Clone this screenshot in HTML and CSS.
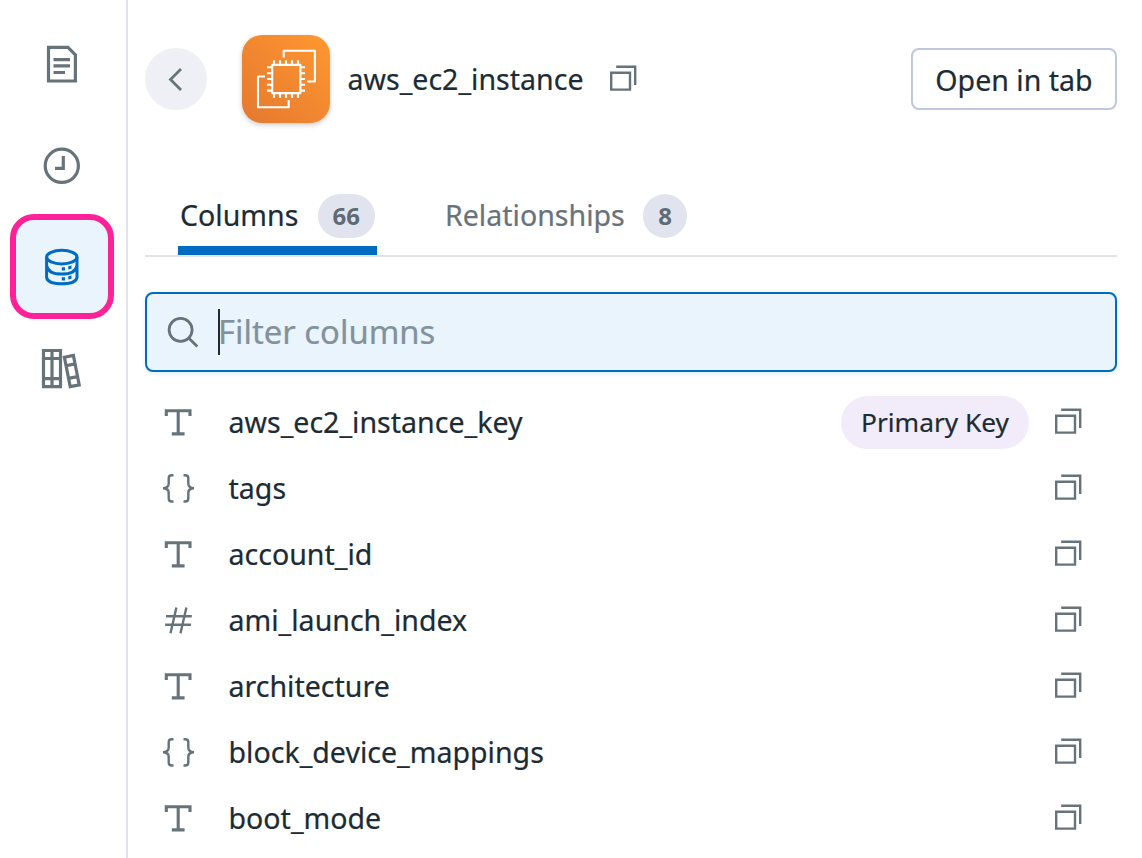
FILE: index.html
```html
<!DOCTYPE html>
<html lang="en">
<head>
<meta charset="utf-8">
<title>aws_ec2_instance</title>
<link rel="stylesheet" href="styles.css">
</head>
<body>
<svg class="defs" width="0" height="0">
  <symbol id="copy" viewBox="0 0 28 28"><path d="M6.2 1.8H25.2V20M1.2 7.8H20V24.6H1.2Z"/></symbol>
  <symbol id="text" viewBox="0 0 32 32"><path d="M4.3 10V4.7H28V10M16.2 4.5V27.5M9.8 27.9H22.6"/></symbol>
  <symbol id="json" viewBox="0 0 32 32"><path d="M11.5 3.2H9.8Q6.7 3.2 6.7 6.2V11.5Q6.7 15.9 1 16.2Q6.7 16.5 6.7 20.7V26.5Q6.7 29.5 9.8 29.5H11.5M21.5 3.2H23.2Q26.3 3.2 26.3 6.2V11.5Q26.3 15.9 32 16.2Q26.3 16.5 26.3 20.7V26.5Q26.3 29.5 23.2 29.5H21.5"/></symbol>
  <symbol id="number" viewBox="0 0 32 32"><path d="M14.4 3.5L8.5 29.3M24.4 3.5L18.5 29.3M4 12.3H29.8M3.2 20.8H29"/></symbol>
</svg>
<div class="app">
  <nav class="sidebar">
    <a class="nav-item"><svg width="52" height="52" viewBox="36 37.5 52 52"><path d="M48.5 46.8H68L75.4 54.3V80.5H48.5Z"/><path d="M53.5 59.1H70M53.5 65.4H70M53.5 72H65"/></svg></a>
    <a class="nav-item"><svg width="52" height="52" viewBox="36 139 52 52"><circle cx="61.8" cy="165.8" r="16.6"/><path d="M63.3 156V168.3H55"/></svg></a>
    <a class="nav-item active"><svg width="52" height="52" viewBox="36 240.5 52 52"><ellipse cx="61.8" cy="256.6" rx="15.2" ry="6.8"/><path d="M46.6 256.6V277Q47.5 283.3 61.8 283.3T77 277V256.6M46.6 265Q48 273.6 61.8 273.6T77 265"/><path class="dots" d="M61.8 266.7H65V270H61.8ZM68.3 265.7L71.5 265V268.3L68.3 269ZM61.8 276.7H65V280H61.8ZM68.3 275.7L71.5 275V278.3L68.3 279Z"/></svg></a>
    <a class="nav-item"><svg width="52" height="52" viewBox="36 343 52 52"><path d="M43.5 350.5H60.5V386.6H43.5ZM52 350.5V386.6M43.5 358.5H60.5M43.5 378.6H60.5M64.4 357.2L73.4 355.4L79.2 384.9L70.2 386.6ZM66 365.7L75 363.9M68.6 378.4L77.5 376.6"/></svg></a>
  </nav>
  <main class="panel">
    <header class="header">
      <button class="back"><svg width="62" height="62" viewBox="145 48 62 62"><path d="M181 69L170.5 79.5L181 90"/></svg></button>
      <div class="service"><svg width="88" height="88" viewBox="242 35 88 88"><path d="M272.2 64.9H300.4V93.1H272.2ZM274 60.3V64.5M280 60.3V64.5M286 60.3V64.5M292 60.3V64.5M298 60.3V64.5M274 93.5V98M280 93.5V98M286 93.5V98M292 93.5V98M298 93.5V98M267 67.3H271.5M267 73.2H271.5M267 79H271.5M267 84.8H271.5M267 90.6H271.5M301 67.3H305M301 73.2H305M301 79H305M301 84.8H305M301 90.6H305"/><path d="M283.7 57.5V50.8H314.9V81.5H307.2M265 76.5H258V107.3H288.7V100"/></svg></div>
      <h1 class="title">aws_ec2_instance</h1>
      <svg class="copy" width="28" height="28"><use href="#copy"/></svg>
      <button class="open">Open in tab</button>
    </header>
    <div class="tabs">
      <div class="tab selected"><span class="columns">Columns</span><b class="count">66</b></div>
      <div class="tab"><span class="relationships">Relationships</span><b class="count">8</b></div>
    </div>
    <div class="filter">
      <svg width="36" height="36" viewBox="165 313.5 36 36"><circle cx="180.6" cy="329.3" r="11.5"/><path d="M188.7 337.5L197.3 346"/></svg>
      <span class="caret"></span><span class="placeholder">Filter columns</span>
    </div>
    <ul class="list">
      <li class="row"><svg class="type bold" width="32" height="32"><use href="#text"/></svg><span class="name">aws_ec2_instance_key</span><span class="badge">Primary Key</span><svg class="copy" width="28" height="28"><use href="#copy"/></svg></li>
      <li class="row"><svg class="type" width="32" height="32"><use href="#json"/></svg><span class="name">tags</span><svg class="copy" width="28" height="28"><use href="#copy"/></svg></li>
      <li class="row"><svg class="type bold" width="32" height="32"><use href="#text"/></svg><span class="name">account_id</span><svg class="copy" width="28" height="28"><use href="#copy"/></svg></li>
      <li class="row"><svg class="type" width="32" height="32"><use href="#number"/></svg><span class="name">ami_launch_index</span><svg class="copy" width="28" height="28"><use href="#copy"/></svg></li>
      <li class="row"><svg class="type bold" width="32" height="32"><use href="#text"/></svg><span class="name">architecture</span><svg class="copy" width="28" height="28"><use href="#copy"/></svg></li>
      <li class="row"><svg class="type" width="32" height="32"><use href="#json"/></svg><span class="name">block_device_mappings</span><svg class="copy" width="28" height="28"><use href="#copy"/></svg></li>
      <li class="row"><svg class="type bold" width="32" height="32"><use href="#text"/></svg><span class="name">boot_mode</span><svg class="copy" width="28" height="28"><use href="#copy"/></svg></li>
    </ul>
  </main>
</div>
</body>
</html>
```
FILE: styles.css
```css
* { box-sizing: border-box; }
body { margin: 0; height: 858px; overflow: hidden; background: #fff; color: #1c2b34; font-family: "Noto Sans", sans-serif; font-size: 28.55px; line-height: 40px; -webkit-text-stroke: 0.2px; }
.defs { display: none; }
svg { display: block; flex: none; fill: none; stroke: #67737b; }
.app { display: flex; height: 858px; }
.sidebar { width: 128px; flex: none; border-right: 2px solid #e1e4ef; padding: 13px 0 0 10px; }
.nav-item { display: flex; align-items: center; justify-content: center; width: 104px; height: 101px; }
.nav-item svg { stroke-width: 3.2; }
.nav-item.active { height: 105px; margin: -1px 0; border: 6px solid #ff2197; border-radius: 24px; background: #e9f4fc; }
.nav-item.active svg { stroke: #006bc0; stroke-width: 3; }
.nav-item .dots { fill: #006bc0; stroke: none; }
.panel { flex: 1; min-width: 0; padding: 35px 25px 0 17px; }
.header { display: flex; align-items: center; height: 88px; }
.back { width: 62px; height: 62px; padding: 0; border: 0; border-radius: 50%; background: #eff0f5; }
.back svg { stroke-width: 2.8; }
.service { width: 88px; height: 88px; margin-left: 35px; border-radius: 20px; background: linear-gradient(45deg, #e4782f, #ff9831); box-shadow: 0 2px 5px #0003; }
.service svg { stroke: #fff; stroke-width: 2.1; stroke-linejoin: round; }
.title { width: 235px; margin: 0 27px 0 17.5px; font-size: 28.55px; font-weight: 400; white-space: nowrap; }
.copy { stroke-width: 2.4; }
.open { width: 206px; height: 62px; margin-left: auto; padding: 2px 0 0; border: 2px solid #bfc6e0; border-radius: 8px; background: #fff; color: inherit; font: inherit; white-space: nowrap; }
.tabs { display: flex; height: 67px; margin-top: 67px; padding-left: 33px; border-bottom: 2px solid #e1e4ef; }
.tab { display: flex; align-items: flex-start; justify-content: space-between; height: 65px; padding: 4px 2px 0; color: #67737b; white-space: nowrap; }
.tab.selected { width: 199px; color: #1c2b34; border-bottom: 9px solid #006bc0; }
.tab + .tab { width: 246px; margin-left: 66px; }
.tab span { padding-top: 1px; }
.count { min-width: 44px; height: 44px; padding: 0 15px; border-radius: 22px; background: #e1e4ee; color: #5e6b73; font-size: 24px; line-height: 44px; text-align: center; -webkit-text-stroke: 0; }
.filter { display: flex; align-items: center; height: 80px; margin-top: 35px; padding-left: 18px; border: 2px solid #006bc0; border-radius: 8px; background: #e9f4fc; box-shadow: 0 2px 4px #006bc01c; font-size: 32.8px; color: #82919a; }
.filter svg { stroke-width: 2.8; }
.caret { width: 2px; height: 46px; margin-left: 17px; background: #1c2b34; }
.placeholder { margin-left: -2px; }
.list { margin: 17px 0 0; padding: 0; list-style: none; }
.row { display: flex; align-items: center; height: 66px; padding: 0 34px 0 17px; white-space: nowrap; }
.type { stroke-width: 2.4; }
.type.bold { stroke-width: 3.1; }
.name { margin-left: 34.5px; margin-right: auto; }
.badge { width: 188px; height: 53px; margin-right: 26px; border-radius: 27px; background: #f2ecfa; font-size: 26.3px; line-height: 53px; text-align: center; }
```
